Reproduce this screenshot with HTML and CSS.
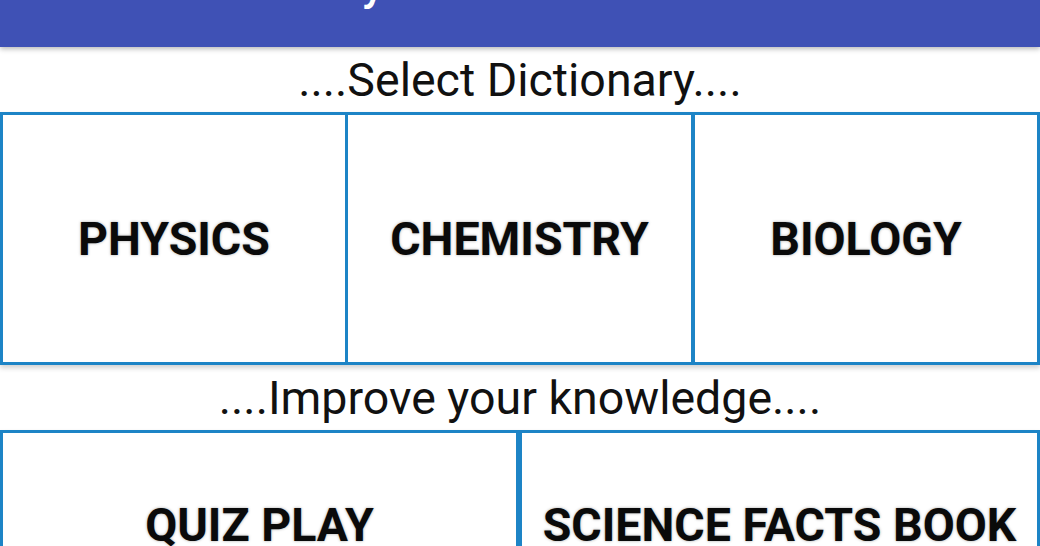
FILE: index.html
```html
<!DOCTYPE html>
<html>
<head>
<meta charset="utf-8">
<link rel="stylesheet" href="styles.css">
</head>
<body>
<div class="appbar"><span class="title">Science Dictionary</span></div>
<div class="heading">....Select Dictionary....</div>
<div class="grid grid3">
  <div class="cell">PHYSICS</div>
  <div class="cell">CHEMISTRY</div>
  <div class="cell">BIOLOGY</div>
</div>
<div class="heading">....Improve your knowledge....</div>
<div class="grid grid2">
  <div class="cell">QUIZ PLAY</div>
  <div class="cell">SCIENCE FACTS BOOK</div>
</div>
</body>
</html>
```
FILE: styles.css
```css
html, body {
  margin: 0;
  padding: 0;
  background: #ffffff;
  font-family: Roboto, "Liberation Sans", sans-serif;
  overflow: hidden;
}
body {
  width: 1040px;
  height: 546px;
}
.appbar {
  position: relative;
  z-index: 2;
  height: 47px;
  background: #3f51b5;
  box-shadow: 0 2px 5px rgba(0, 0, 0, 0.28);
  overflow: hidden;
  display: flex;
  align-items: flex-start;
}
.title {
  color: #ffffff;
  font-size: 45px;
  font-weight: 500;
  line-height: 45px;
  margin-top: -38px;
  margin-left: 10px;
}
.heading {
  height: 63px;
  padding-top: 2px;
  line-height: 63px;
  text-align: center;
  font-size: 46.5px;
  color: #111111;
  font-weight: 400;
}
.grid {
  display: grid;
  border: 3px solid #1d84c6;
  box-shadow: 0 3px 5px rgba(0, 0, 0, 0.18);
  overflow: hidden;
}
.grid3 {
  grid-template-columns: 342px 346px 346px;
  height: 247px;
}
.grid2 {
  grid-template-columns: 513px 521px;
  height: 184px;
}
.cell {
  display: flex;
  align-items: center;
  justify-content: center;
  font-size: 46.5px;
  font-weight: 700;
  color: #0a0a0a;
  text-shadow: 0 0 3px rgba(0, 0, 0, 0.35);
  white-space: nowrap;
}
.grid3 .cell + .cell {
  border-left: 3px solid #1d84c6;
}
.grid3 .cell:last-child {
  border-left-width: 4px;
}
.grid2 .cell + .cell {
  border-left: 6px solid #1d84c6;
}
```
